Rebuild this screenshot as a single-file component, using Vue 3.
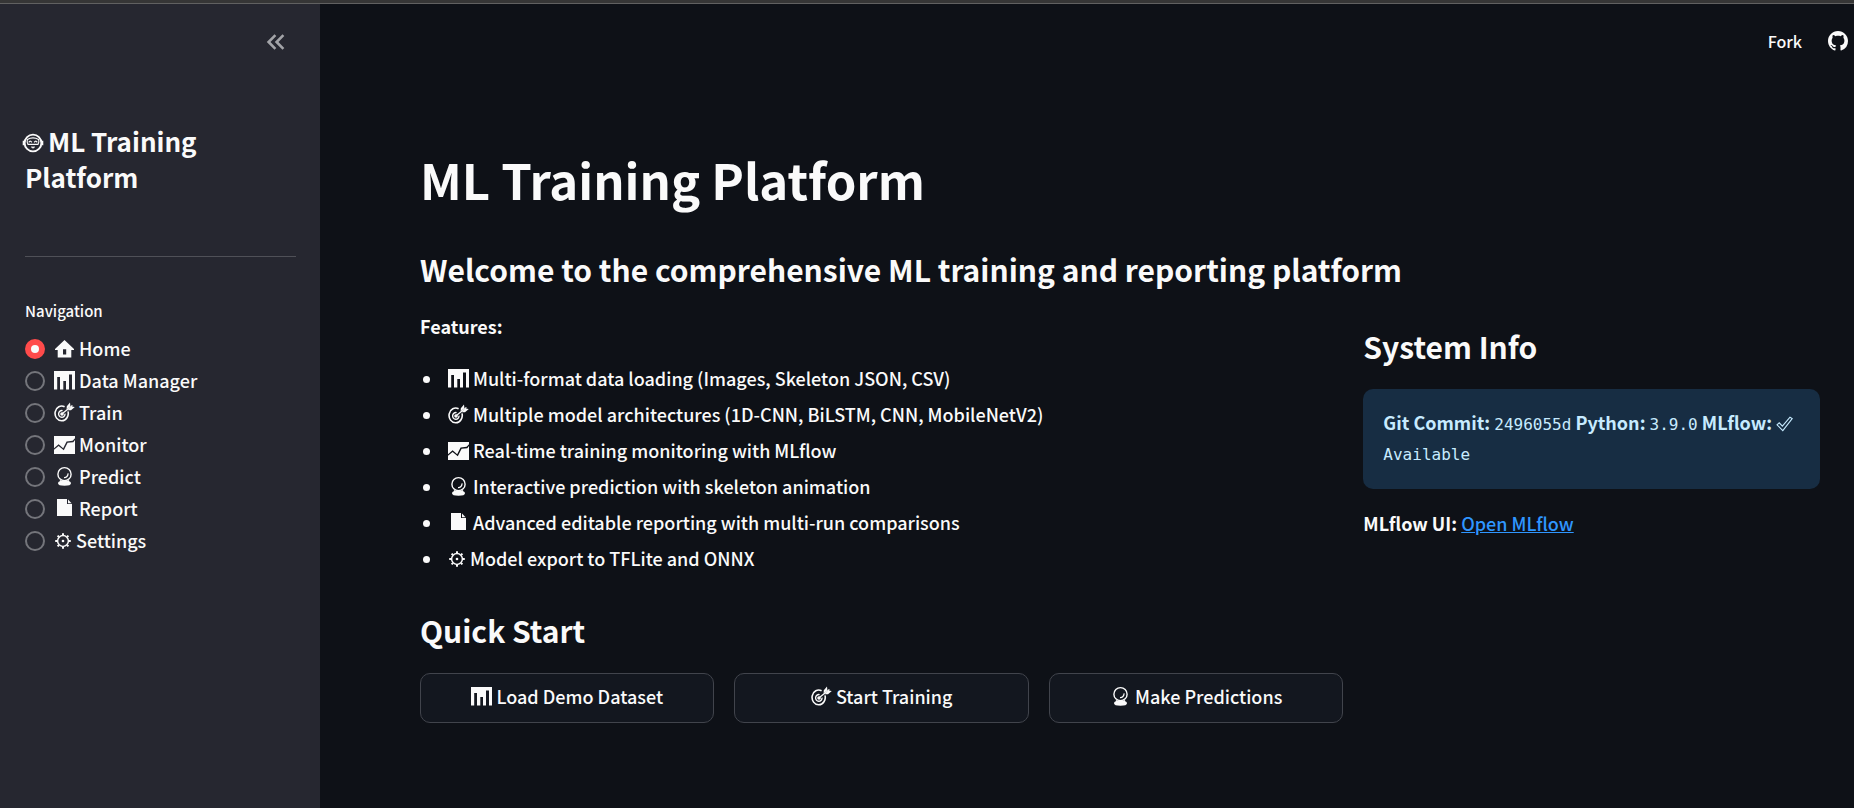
<script setup>
import { ref, h } from 'vue'

const shapes = {
  home: {
    w: 22,
    body: () => [
      h('path', {
        fill: 'currentColor',
        'fill-rule': 'evenodd',
        d: 'M10.5 3L20 12V13H17.3V20.5H3.7V13H1V12ZM9 12.2V17.6H12.2V12.2Z'
      })
    ]
  },
  bars: {
    w: 22,
    body: () => [
      h('path', {
        fill: 'currentColor',
        d: 'M0 2H21V20.5H18V5.5H15V20.5H12V12H9.3V20.5H6V8H3.2V20.5H0Z'
      })
    ]
  },
  target: {
    w: 22,
    body: () => [
      h('path', {
        fill: 'none',
        stroke: 'currentColor',
        'stroke-width': 1.6,
        d: 'M10.6 5.8A6.6 7.4 0 1 0 14 10.4'
      }),
      h('path', {
        fill: 'none',
        stroke: 'currentColor',
        'stroke-width': 1.4,
        d: 'M8.6 9.6A3.2 3.4 0 1 0 11 12.6'
      }),
      h('path', {
        fill: 'none',
        stroke: 'currentColor',
        'stroke-width': 1.3,
        d: 'M7.8 13L18.4 4.6'
      }),
      h('path', {
        fill: 'currentColor',
        d: 'M12.6 8.4L12.8 5.2L16 1.6L16.4 5.2ZM13.6 9.2L17 9.2L20.8 6L17.4 5.6Z'
      }),
      h('circle', { fill: 'currentColor', cx: 8, cy: 13, r: 1.8 })
    ]
  },
  trend: {
    w: 22,
    body: () => [
      h('path', {
        fill: 'currentColor',
        d: 'M0 3H21V5.2L18.6 7.8L12.6 8.6L9.2 15.2L4.6 11.2L0 15.2Z'
      }),
      h('path', {
        fill: 'currentColor',
        d: 'M21 7L19.3 9.2L13.6 9.8L9.8 17.2L4.6 12.9L0 16.8V21H21Z'
      })
    ]
  },
  crystal: {
    w: 22,
    body: () => [
      h('circle', {
        fill: 'none',
        stroke: 'currentColor',
        'stroke-width': 1.4,
        cx: 10.5,
        cy: 9.2,
        r: 6.6
      }),
      h('path', {
        fill: 'none',
        stroke: 'currentColor',
        'stroke-width': 1.3,
        d: 'M14 8.4A3.8 3.8 0 0 1 10 12.6'
      }),
      h('path', {
        fill: 'currentColor',
        d: 'M6 15Q10.5 17 15 15L15.2 16.3Q17 17 17 18.3Q17 20.8 10.5 20.8Q4 20.8 4 18.3Q4 17 5.8 16.3Z'
      })
    ]
  },
  page: {
    w: 22,
    body: () => [
      h('path', { fill: 'currentColor', d: 'M3 2H13V7H18V19H3Z' }),
      h('path', { fill: 'currentColor', d: 'M14 2.6L17.6 6.2H14Z' })
    ]
  },
  gear: {
    w: 19,
    body: () => [
      h('circle', {
        fill: 'none',
        stroke: 'currentColor',
        'stroke-width': 1.5,
        cx: 9,
        cy: 12,
        r: 5.4
      }),
      h('path', {
        fill: 'none',
        stroke: 'currentColor',
        'stroke-width': 2,
        d: 'M9 4.2V6.4M9 17.6V19.8M1.2 12H3.4M14.6 12H16.8M3.6 6.6L5 8M13 16L14.4 17.4M3.6 17.4L5 16M13 8L14.4 6.6'
      }),
      h('circle', { fill: 'currentColor', cx: 9, cy: 12, r: 1.3 })
    ]
  }
}

const Glyph = (props) => {
  const s = shapes[props.name]
  return h(
    'svg',
    { width: s.w, height: 22, viewBox: `0 0 ${s.w} 22`, 'aria-hidden': 'true' },
    s.body()
  )
}
Glyph.props = ['name']

const current = ref('Home')
const nav = [
  { icon: 'home', label: 'Home' },
  { icon: 'bars', label: 'Data Manager' },
  { icon: 'target', label: 'Train' },
  { icon: 'trend', label: 'Monitor' },
  { icon: 'crystal', label: 'Predict' },
  { icon: 'page', label: 'Report' },
  { icon: 'gear', label: 'Settings' }
]
const features = [
  { icon: 'bars', label: 'Multi-format data loading (Images, Skeleton JSON, CSV)' },
  { icon: 'target', label: 'Multiple model architectures (1D-CNN, BiLSTM, CNN, MobileNetV2)' },
  { icon: 'trend', label: 'Real-time training monitoring with MLflow' },
  { icon: 'crystal', label: 'Interactive prediction with skeleton animation' },
  { icon: 'page', label: 'Advanced editable reporting with multi-run comparisons' },
  { icon: 'gear', label: 'Model export to TFLite and ONNX' }
]
const actions = [
  { icon: 'bars', label: 'Load Demo Dataset' },
  { icon: 'target', label: 'Start Training' },
  { icon: 'crystal', label: 'Make Predictions' }
]
</script>

<template>
  <div class="app">
    <div class="strip"></div>
    <div class="shell">
      <aside class="sidebar">
        <div class="side-head">
          <button class="collapse" type="button" aria-label="Collapse sidebar">
            <svg width="20" height="18" viewBox="0 0 20 18" fill="none" stroke="currentColor" stroke-width="2.6">
              <path d="M9.4 2.2L2.6 9L9.4 15.8M17.4 2.2L10.6 9L17.4 15.8" />
            </svg>
          </button>
        </div>
        <h1 class="side-title">
          <svg class="face" width="22" height="22" viewBox="0 0 22 22" fill="none" stroke="currentColor" aria-hidden="true">
            <circle cx="11" cy="11" r="8.4" stroke-width="1.9" />
            <path d="M1.6 8.8V13.2M20.4 8.8V13.2" stroke-width="1.8" />
            <path d="M5.4 7.4Q11 4.4 16.6 7.4Q17.4 10 16 12.4H6Q4.6 10 5.4 7.4Z" stroke-width="1.1" />
            <path d="M6.8 10.4Q8.2 7.8 9.8 10.4M12.2 10.4Q13.8 7.8 15.2 10.4" stroke-width="1.2" />
            <path d="M9.4 15H12.6L11 16.2Z" fill="currentColor" stroke-width="0.8" />
          </svg>ML Training Platform
        </h1>
        <hr class="rule" />
        <fieldset class="nav">
          <legend>Navigation</legend>
          <label v-for="item in nav" :key="item.label" class="nav-item">
            <input v-model="current" type="radio" name="page" :value="item.label" />
            <span class="nav-text"><Glyph :name="item.icon" class="glyph" />{{ item.label }}</span>
          </label>
        </fieldset>
      </aside>

      <div class="content">
        <header class="toolbar">
          <button class="fork" type="button">Fork</button>
          <a class="github" href="#" aria-label="View source on GitHub">
            <svg width="20" height="20" viewBox="0 0 16 16" fill="currentColor">
              <path d="M8 0C3.58 0 0 3.58 0 8c0 3.54 2.29 6.53 5.47 7.59.4.07.55-.17.55-.38 0-.19-.01-.82-.01-1.49-2.01.37-2.53-.49-2.69-.94-.09-.23-.48-.94-.82-1.13-.28-.15-.68-.52-.01-.53.63-.01 1.08.58 1.23.82.72 1.21 1.87.87 2.33.66.07-.52.28-.87.51-1.07-1.78-.2-3.64-.89-3.64-3.95 0-.87.31-1.59.82-2.15-.08-.2-.36-1.02.08-2.12 0 0 .67-.21 2.2.82.64-.18 1.32-.27 2-.27s1.36.09 2 .27c1.53-1.04 2.2-.82 2.2-.82.44 1.1.16 1.92.08 2.12.51.56.82 1.27.82 2.15 0 3.07-1.87 3.75-3.65 3.95.29.25.54.73.54 1.48 0 1.07-.01 1.93-.01 2.2 0 .21.15.46.55.38A8.01 8.01 0 0 0 16 8c0-4.42-3.58-8-8-8z" />
            </svg>
          </a>
        </header>

        <main class="main">
          <h1 class="title">ML Training Platform</h1>
          <h2 class="heading">Welcome to the comprehensive ML training and reporting platform</h2>
          <div class="columns">
            <section class="col-wide">
              <p class="lead"><strong>Features:</strong></p>
              <ul class="features">
                <li v-for="f in features" :key="f.label">
                  <span><Glyph :name="f.icon" class="glyph" />{{ f.label }}</span>
                </li>
              </ul>
              <h2 class="heading">Quick Start</h2>
              <div class="actions">
                <button v-for="a in actions" :key="a.label" class="action" type="button">
                  <Glyph :name="a.icon" class="glyph" />{{ a.label }}
                </button>
              </div>
            </section>
            <section class="col-narrow">
              <h2 class="heading">System Info</h2>
              <p class="info">
                <strong>Git Commit:</strong> <code>2496055d</code> <strong>Python:</strong> <code>3.9.0</code>
                <strong> MLflow:</strong> <svg class="check" width="17" height="16" viewBox="0 0 17 16" fill="none" stroke="currentColor" stroke-width="1.1" role="img" aria-label="Yes"><path d="M1 8.8L3.2 6.8L6.4 10.2L14 1.2L16.2 2.6L6.8 14.6Z" /></svg>
                <code> Available</code>
              </p>
              <p class="ui-link"><strong>MLflow UI:</strong> <a href="#">Open MLflow</a></p>
            </section>
          </div>
        </main>
      </div>
    </div>
  </div>
</template>

<style>
body {
  background: #0e1117;
}
</style>

<style scoped>
.app {
  display: flex;
  flex-direction: column;
  min-height: 100vh;
  background: #0e1117;
  color: #fafafa;
  font-family: "Noto Sans CJK SC", "Noto Sans", sans-serif;
  font-size: 18px;
  font-weight: 500;
  line-height: 30px;
}
.app *,
.app {
  box-sizing: border-box;
}
h1,
h2,
p,
ul,
fieldset {
  margin: 0;
  padding: 0;
}
button {
  font: inherit;
  color: inherit;
  cursor: pointer;
}
.strip {
  height: 4px;
  background: #363636;
  border-bottom: 1px solid #616161;
}
.shell {
  display: flex;
  flex: 1;
}
.sidebar {
  flex: 0 0 320px;
  padding: 0 24px 24px 25px;
  background: #262730;
}
.side-head {
  display: flex;
  justify-content: flex-end;
  padding: 24px 0;
  height: 119px;
}
.collapse {
  display: flex;
  align-items: center;
  height: 28px;
  padding: 0 10px;
  background: none;
  border: 0;
  color: #a3a4a8;
}
.side-title {
  font-size: 26px;
  line-height: 36px;
  font-weight: 700;
}
.face {
  margin: 0 4px 0 -3px;
  vertical-align: -2px;
}
.rule {
  height: 1px;
  margin: 61px 0 40px;
  border: 0;
  background: #4f5057;
}
.nav {
  border: 0;
  min-width: 0;
}
.nav legend {
  padding: 0;
  margin-bottom: 8px;
  font-size: 15px;
  line-height: 28px;
}
.nav-item {
  display: flex;
  align-items: center;
  gap: 9px;
  height: 32px;
}
.nav-item input {
  appearance: none;
  display: grid;
  place-items: center;
  flex: none;
  width: 20px;
  height: 20px;
  margin: 0;
  border: 2px solid #74757b;
  border-radius: 50%;
}
.nav-item input:checked {
  border-color: #ff4b4b;
  background: #ff4b4b;
}
.nav-item input:checked::after {
  content: "";
  width: 8px;
  height: 8px;
  border-radius: 50%;
  background: #fafafa;
}
.nav-text {
  padding-bottom: 2px;
}
.glyph {
  margin-right: 3px;
  vertical-align: -3px;
}
.content {
  flex: 1;
  min-width: 0;
}
.toolbar {
  display: flex;
  justify-content: flex-end;
  align-items: center;
  gap: 26px;
  height: 74px;
  padding-right: 6px;
}
.fork {
  padding: 0;
  background: none;
  border: 0;
  font-size: 16px;
  line-height: 28px;
}
.github {
  display: flex;
  color: #fafafa;
}
.main {
  padding: 68px 34px 84px 100px;
}
.title {
  font-size: 49px;
  line-height: 66px;
  font-weight: 700;
  margin-bottom: 36px;
}
.heading {
  font-size: 30px;
  line-height: 42px;
  font-weight: 700;
}
.columns {
  display: flex;
  gap: 20px;
  margin-top: 21px;
}
.col-wide {
  flex: 1 1 calc(66.6667% - 20px);
  min-width: 0;
}
.col-narrow {
  flex: 1 1 calc(33.3333% - 20px);
  min-width: 0;
  padding-top: 14px;
}
.lead {
  margin-bottom: 22px;
}
.features {
  display: flex;
  flex-direction: column;
  gap: 6px;
  margin-bottom: 36px;
  padding-left: 3px;
  list-style: none;
}
.features li {
  display: flex;
  gap: 18px;
}
.features li::before {
  content: "";
  flex: none;
  width: 7px;
  height: 7px;
  margin-top: 13px;
  border-radius: 50%;
  background: currentColor;
}
.actions {
  display: flex;
  gap: 20px;
  margin-top: 22px;
}
.action {
  flex: 1;
  height: 50px;
  padding: 0 12px 4px;
  background: #13171f;
  border: 1px solid #41444c;
  border-radius: 10px;
}
.info {
  margin: 22px 0 19px;
  padding: 18px 20px 22px;
  border-radius: 10px;
  background: #172d43;
  color: #c7ebff;
}
.info code {
  font-family: "DejaVu Sans Mono", monospace;
  font-size: 16px;
  font-weight: 400;
  line-height: 1;
}
.check {
  vertical-align: -2px;
}
.ui-link a {
  color: #2f96ff;
  text-decoration: underline;
}
</style>
